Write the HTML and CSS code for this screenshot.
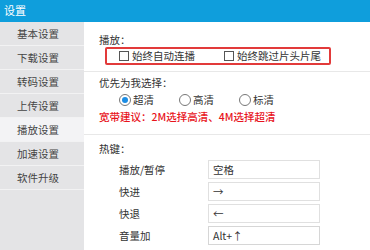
FILE: index.html
```html
<!DOCTYPE html>
<html lang="zh-CN">
<head>
    <meta charset="UTF-8">
    <title>设置</title>
    <link rel="stylesheet" href="styles.css">
</head>
<body>
    <div class="window">
        <div class="titlebar">设置</div>
        <div class="main">
            <div class="sidebar">
                <div class="nav-item">基本设置</div>
                <div class="nav-item">下载设置</div>
                <div class="nav-item">转码设置</div>
                <div class="nav-item">上传设置</div>
                <div class="nav-item active">播放设置</div>
                <div class="nav-item">加速设置</div>
                <div class="nav-item">软件升级</div>
            </div>

            <div class="content">
                <div class="section play">
                    <div class="label">播放：</div>
                    <div class="check-box">
                        <div class="check"><span class="box"></span>始终自动连播</div>
                        <div class="check"><span class="box"></span>始终跳过片头片尾</div>
                    </div>
                </div>

                <div class="section quality">
                    <div class="label">优先为我选择：</div>
                    <div class="radios">
                        <div class="radio checked"><span class="dot"></span>超清</div>
                        <div class="radio"><span class="dot"></span>高清</div>
                        <div class="radio"><span class="dot"></span>标清</div>
                    </div>
                    <div class="tip">宽带建议：2M选择高清、4M选择超清</div>
                </div>

                <div class="section hotkeys">
                    <div class="label">热键：</div>
                    <div class="hotkey"><span class="key-name">播放/暂停</span><div class="key-input">空格</div></div>
                    <div class="hotkey"><span class="key-name">快进</span><div class="key-input">→</div></div>
                    <div class="hotkey"><span class="key-name">快退</span><div class="key-input">←</div></div>
                    <div class="hotkey"><span class="key-name">音量加</span><div class="key-input last">Alt+↑</div></div>
                </div>
            </div>
        </div>
    </div>
</body>
</html>
```

FILE: styles.css
```css
* { margin: 0; padding: 0; box-sizing: border-box; }
body { font-family: "Noto Sans CJK SC", "Noto Sans", sans-serif; font-size: 10.5px; color: #333; background: #fff; }
.window { width: 370px; height: 250px; overflow: hidden; display: flex; flex-direction: column; }
.titlebar { height: 22px; line-height: 21px; padding-left: 4px; background: #0f9edc; color: #fff; font-size: 11px; }
.main { flex: 1; display: flex; }
.sidebar { width: 84px; background: #e4e4e6; }
.nav-item { height: 24px; line-height: 23px; padding-left: 17px; border-bottom: 1px solid #f2f2f3; color: #444; }
.nav-item.active { background: #f3f3f5; }
.content { flex: 1; }
.section { padding-left: 15px; border-bottom: 1px solid #e8e8e8; }
.label { line-height: 14px; }
.play { padding-top: 11px; padding-bottom: 6px; }
.check-box { margin: 0 0 0 6px; width: 226px; height: 18px; border: 2px solid #e23a3a; border-radius: 2px; display: flex; align-items: center; padding-left: 12px; }
.check { display: flex; align-items: center; line-height: 14px; }
.check:first-child { width: 105px; }
.box { width: 10px; height: 10px; border: 1px solid #555; background: #fff; margin-right: 3px; }
.quality { padding-top: 4px; padding-bottom: 10px; }
.radios { display: flex; margin-top: 3px; padding-left: 20px; line-height: 14px; }
.radio { display: flex; align-items: center; width: 60px; }
.dot { width: 12px; height: 12px; border: 1px solid #777; border-radius: 50%; margin-right: 2px; display: flex; align-items: center; justify-content: center; background: #fff; }
.radio.checked .dot::after { content: ""; width: 6px; height: 6px; border-radius: 50%; background: #1c8de4; }
.tip { margin-top: 3px; line-height: 14px; color: #e8141c; font-weight: 500; }
.hotkeys { padding-top: 7px; border-bottom: none; }
.hotkeys .label { margin-bottom: 2px; }
.hotkey { display: flex; align-items: center; height: 22px; padding-left: 5px; }
.key-name { width: 104px; padding-left: 15px; }
.key-input { width: 112px; height: 19px; line-height: 17px; border: 1px solid #e0e0e0; padding-left: 4px; color: #333; }
.key-input.last { border-color: #d6d6d6; }
```
